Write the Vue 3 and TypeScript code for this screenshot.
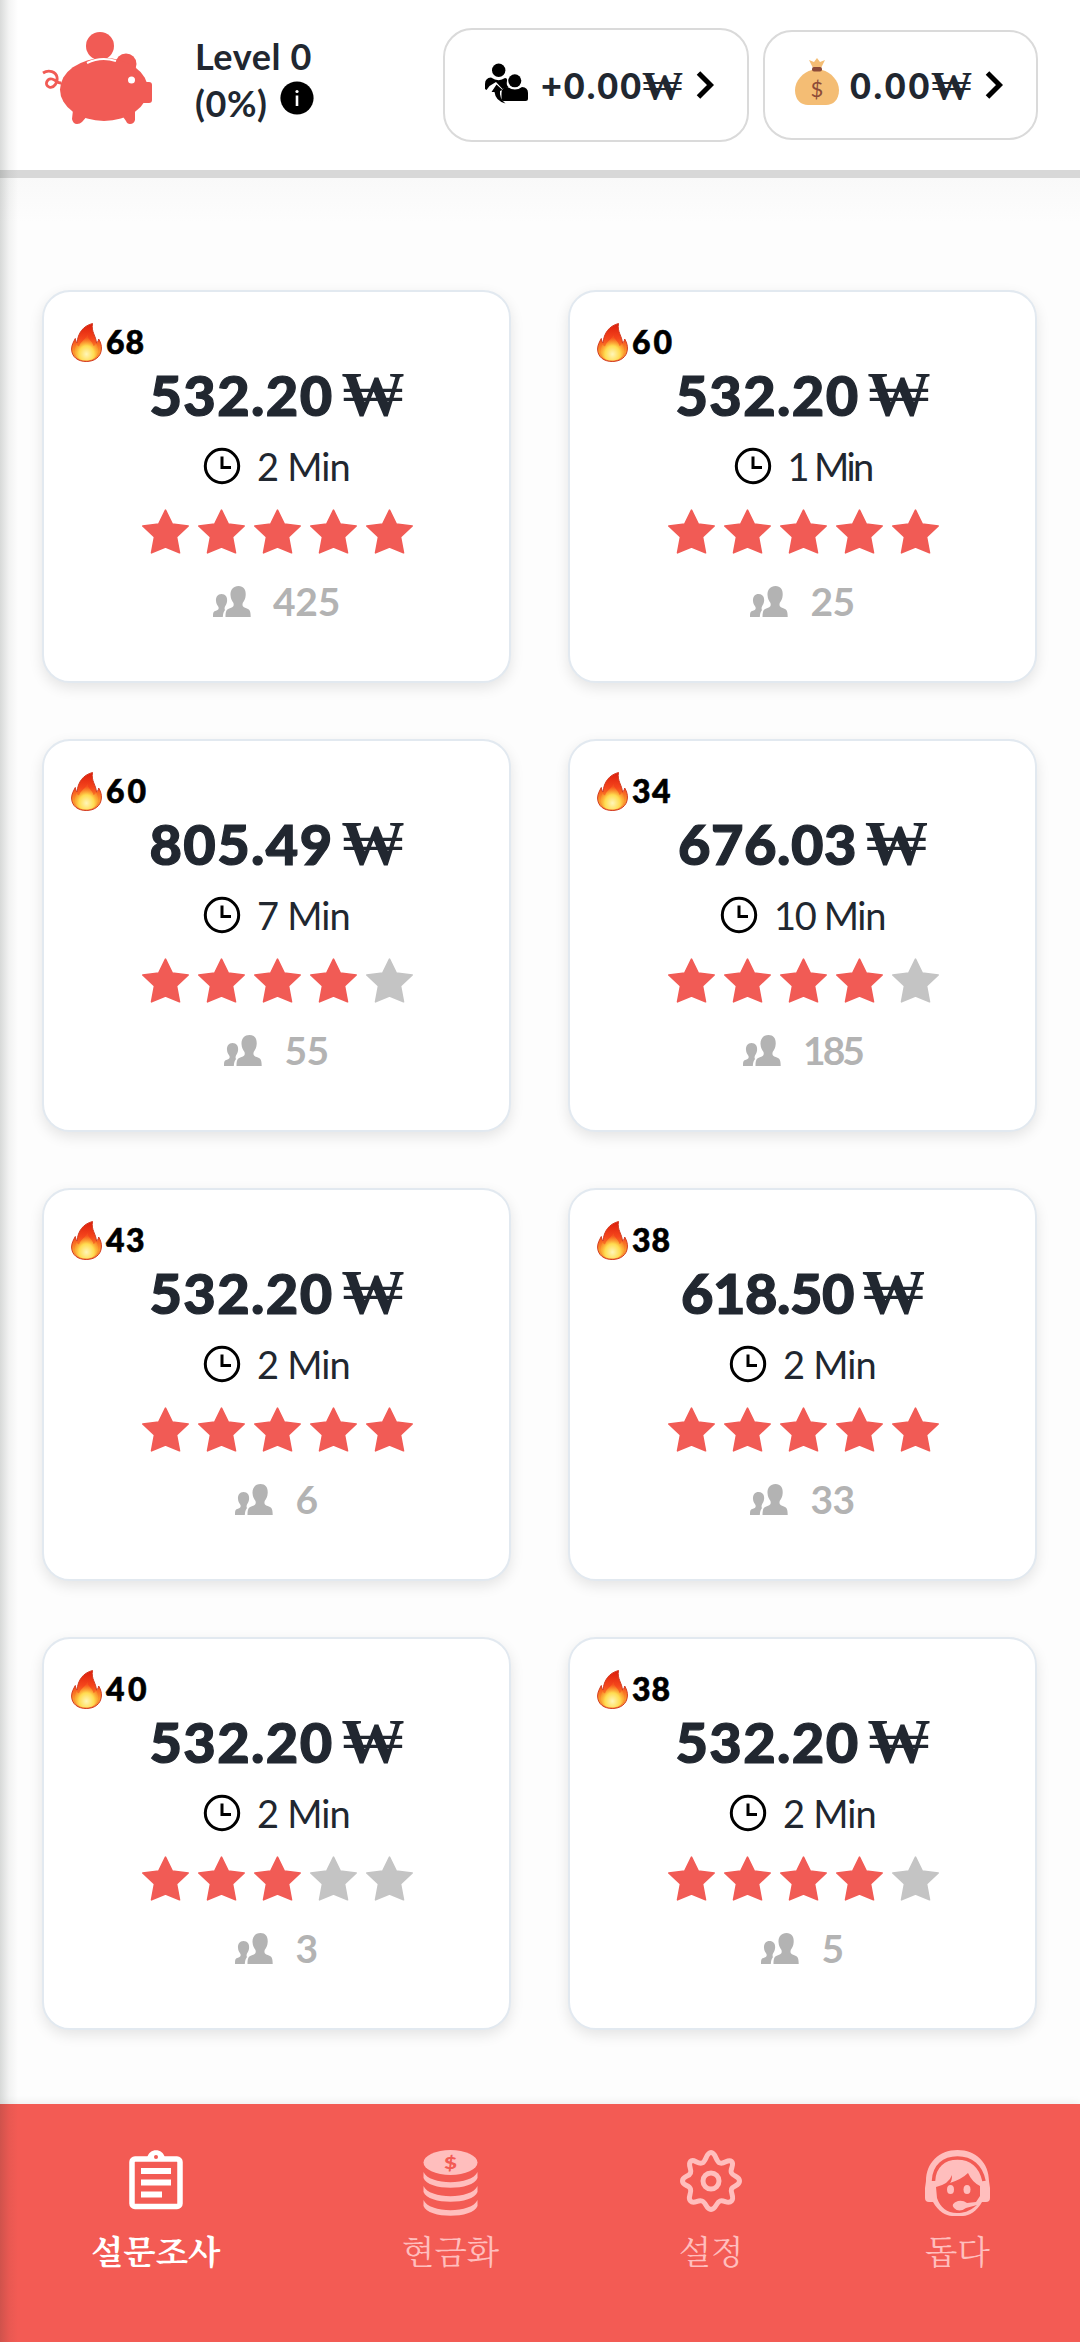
<script setup lang="ts">
interface Survey {
  score: string
  scoreWidth: number
  price: string
  priceWidth: number
  minutes: string
  minutesWidth: number
  stars: number
  people: string
  peopleWidth: number
}

const surveys: Survey[] = [
  { score: '68', scoreWidth: 39, price: '532.20', priceWidth: 184, minutes: '2 Min', minutesWidth: 93, stars: 5, people: '425', peopleWidth: 67 },
  { score: '60', scoreWidth: 43, price: '532.20', priceWidth: 184, minutes: '1 Min', minutesWidth: 84, stars: 5, people: '25', peopleWidth: 44 },
  { score: '60', scoreWidth: 43, price: '805.49', priceWidth: 184, minutes: '7 Min', minutesWidth: 93, stars: 4, people: '55', peopleWidth: 44 },
  { score: '34', scoreWidth: 40, price: '676.03', priceWidth: 179, minutes: '10 Min', minutesWidth: 111, stars: 4, people: '185', peopleWidth: 59 },
  { score: '43', scoreWidth: 40, price: '532.20', priceWidth: 184, minutes: '2 Min', minutesWidth: 93, stars: 5, people: '6', peopleWidth: 22 },
  { score: '38', scoreWidth: 39, price: '618.50', priceWidth: 173, minutes: '2 Min', minutesWidth: 93, stars: 5, people: '33', peopleWidth: 44 },
  { score: '40', scoreWidth: 44, price: '532.20', priceWidth: 184, minutes: '2 Min', minutesWidth: 93, stars: 3, people: '3', peopleWidth: 22 },
  { score: '38', scoreWidth: 39, price: '532.20', priceWidth: 184, minutes: '2 Min', minutesWidth: 93, stars: 4, people: '5', peopleWidth: 22 },
]

const ctx = document.createElement('canvas').getContext('2d')

// Letter spacing that makes a string fill the given width in the given font.
function fit(text: string, font: string, width: number) {
  if (!ctx) return {}
  ctx.font = font
  const spacing = (width - ctx.measureText(text).width) / text.length
  return { letterSpacing: `${spacing.toFixed(2)}px` }
}
</script>

<template>
  <div class="screen">
    <header class="topbar">
      <svg class="pig" viewBox="0 0 110 92" width="110" height="92">
        <g fill="#f15b55">
          <circle cx="58" cy="14" r="14" />
          <circle cx="84" cy="32" r="10.500" />
          <ellipse cx="62" cy="57.500" rx="44" ry="31.500" />
          <path d="M98 50h9q3 0 3 3v15q0 3-3 3h-9z" />
          <path d="M31 78h16v4l-7 8q-2 2-5 2-4 0-5-5zM79 82l14-5v11q-1 4-5 4-3 0-4-3z" />
        </g>
        <path d="M45 31q14-7 29-2" fill="none" stroke="#fff" stroke-width="2" />
        <circle cx="89.500" cy="48" r="3.500" fill="#fff" />
        <path d="M1 41c6-4 13-1 14 4s-3 12-8 10-2-9 3-8c4 1 5 4 9 4" fill="none" stroke="#f15b55" stroke-width="2.800" />
      </svg>
      <div class="level">
        <div class="line">Level 0</div>
        <div class="line">
          <span>(0%)</span>
          <svg class="info" viewBox="0 0 34 34" width="34" height="34">
            <circle cx="17" cy="17" r="16.600" fill="#000" />
            <circle cx="17" cy="10.500" r="1.600" fill="#fff" />
            <path d="M17 14.500V25" stroke="#fff" stroke-width="2.600" />
          </svg>
        </div>
      </div>
      <div class="pill refer">
        <svg class="friends" viewBox="0 0 44 41" width="44" height="41">
          <circle cx="13.700" cy="7.300" r="6.700" />
          <path d="M0 26v-5q0-6 6-6.500 7.500 5 14 .5 2.500 0 2 3-1 4 1.500 6l-6 2-6.500-7-6.500 4-3 4z" />
          <circle cx="29.800" cy="17.800" r="6.500" />
          <path d="M16.500 36V30q0-5.500 6-6 7.500 5 14.500 0 6 .5 6 6v5.500q0 2.500-2.500 2.500H18.500q-2 0-2-2z" />
          <path d="M6.500 29l5-7.500 6 5.500-2.500 1q-1 7 5.500 12.500-10-2.500-11-11.500z" />
        </svg>
        <span class="money">
          <span class="amount" :style="fit('+0.00', '900 36px Lato', 102)">+0.00</span><span class="won">₩</span>
        </span>
        <svg class="chev" viewBox="0 0 18 28" width="18" height="28"><path d="M2.500 2L14.500 14 2.500 26" /></svg>
      </div>
      <div class="pill cash">
        <svg class="bag" viewBox="0 0 44 48" width="44" height="48">
          <path d="M14 2l5 2 3-4 3 4 5-2-4 8h-8z" fill="#f4bd74" />
          <path d="M17 12h10c9 2 17 11 17 20 0 10-6 15-13 15H13C6 47 0 42 0 32c0-9 8-18 17-20z" fill="#f4bd74" />
          <rect x="17" y="9" width="10" height="4.500" rx="2" fill="#8d4b38" />
          <text x="22" y="39" text-anchor="middle" font-family="Lato" font-size="22" fill="#8d4b38">$</text>
        </svg>
        <span class="money">
          <span class="amount" :style="fit('0.00', '900 36px Lato', 82)">0.00</span><span class="won">₩</span>
        </span>
        <svg class="chev" viewBox="0 0 18 28" width="18" height="28"><path d="M2.500 2L14.500 14 2.500 26" /></svg>
      </div>
    </header>

    <main class="grid">
      <article v-for="(s, i) in surveys" :key="i" class="card">
        <div class="badge">
          <svg viewBox="0 0 31 39" width="31" height="39">
            <defs>
              <linearGradient :id="`outer${i}`" x1="0" y1="0" x2="0" y2="1">
                <stop offset="0" stop-color="#dc1c0c" />
                <stop offset=".4" stop-color="#f5461c" />
                <stop offset=".75" stop-color="#fb9a2c" />
                <stop offset="1" stop-color="#f3843a" />
              </linearGradient>
              <radialGradient :id="`inner${i}`" cx=".5" cy=".75" r=".65">
                <stop offset="0" stop-color="#fff6b8" />
                <stop offset=".5" stop-color="#ffdc50" />
                <stop offset="1" stop-color="#fb8c20" stop-opacity=".2" />
              </radialGradient>
            </defs>
            <path d="M21.500 .5C20 9 25 13 25.500 20c1.500-1 2-2.500 2.200-4C30 20 30.600 23 30.400 26c-.4 8-7 12.500-15.200 12.500S.6 34 .6 26C.6 22 2.500 19 4.300 15.500c.3 2 .7 3.500 1.700 4.500C7 10 12 3 21.500 .5z" :fill="`url(#outer${i})`" stroke="#d23a20" stroke-width="1" />
            <path d="M16.500 12c0 4 5 6 6 11 1.500-.5 2-1.500 2.500-3 5 9 1 17.500-9.800 17.500S1.500 30 5.500 21c.7 1.500 1.500 2 2.500 2.500C9 19 15 16 16.500 12z" :fill="`url(#inner${i})`" />
          </svg>
          <span class="score" :style="fit(s.score, '900 32px Lato', s.scoreWidth)">{{ s.score }}</span>
        </div>
        <div class="row price">
          <span :style="fit(s.price, '900 56px Lato', s.priceWidth)">{{ s.price }}</span>
          <span class="won">₩</span>
        </div>
        <div class="row time">
          <svg viewBox="0 0 38 38" width="38" height="38" fill="none" stroke="#000">
            <circle cx="19" cy="19" r="16.700" stroke-width="3" />
            <path d="M19 9.500V20.500H28" stroke-width="3" />
          </svg>
          <span :style="fit(s.minutes, '400 38px Lato', s.minutesWidth)">{{ s.minutes }}</span>
        </div>
        <div class="stars">
          <svg v-for="n in 5" :key="n" viewBox="0 0 47 45" width="47" height="45" :class="{ on: n <= s.stars }">
            <path d="M23.500 1.200l6.800 13.800 15.900 2L34.500 27.800 37.500 43.800 23.500 38 9.500 43.800 12.500 27.800 .8 17l15.900-2z" />
          </svg>
        </div>
        <div class="row people">
          <svg viewBox="0 0 38 31" width="38" height="31" fill="#b3b3b3">
            <path d="M25.500 0c5 0 7.500 3.500 7.200 9-.2 4-1.700 6-3 8-.8 3 .3 4 3 5 3.500 1.300 5 2 5 9H12.500c0-7 1.500-7.700 5-9 2.700-1 3.800-2 3-5-1.300-2-2.800-4-3-8C17.300 3.500 20.500 0 25.500 0z" />
            <path d="M8.500 8c4 0 6 3 5.600 7-.3 3-1.500 4-2.300 6-.6 2 .2 3 .2 3-1.500 1.800-2 4-2.200 7H0c0-5 .6-5.500 3-6.300 2.500-.7 3-1.700 2.500-3.700C4.500 19 3.200 18 3 15c-.3-4 1.700-7 5.500-7z" />
          </svg>
          <span :style="fit(s.people, '700 39px Lato', s.peopleWidth)">{{ s.people }}</span>
        </div>
      </article>
    </main>

    <nav class="nav">
      <a class="tab active">
        <svg viewBox="0 0 54 60" width="54" height="60">
          <rect x="3" y="9" width="48" height="47.500" rx="3" fill="none" stroke="#fff" stroke-width="5.500" />
          <path d="M18 8C20-2.500 34-2.500 36 8z" fill="#fff" />
          <circle cx="27" cy="7" r="2" fill="#f35b54" />
          <path d="M12 21h30M12 32.500h30M12 44.500h21" stroke="#fff" stroke-width="6" />
        </svg>
        <span>설문조사</span>
      </a>
      <a class="tab">
        <svg viewBox="0 0 55 66" width="55" height="66">
          <ellipse cx="27.500" cy="12.500" rx="27" ry="12.500" fill="#ffbebd" />
          <text x="27.500" y="18.500" text-anchor="middle" font-family="Lato" font-weight="900" font-size="17" fill="#f35b54" textLength="13" lengthAdjust="spacingAndGlyphs">$</text>
          <path v-for="y in [22, 36, 50]" :key="y" :transform="`translate(0 ${y})`" d="M.5 0C6 13.500 49 13.500 54.500 0V6C50 19 5 19 .5 6z" fill="#ffbebd" />
        </svg>
        <span>현금화</span>
      </a>
      <a class="tab gear">
        <svg viewBox="0 0 62 62" width="62" height="62" fill="none" stroke="#ffbebd" stroke-width="5">
          <circle cx="31" cy="31" r="8" />
          <path stroke-linejoin="round" d="M31 2.500c5 0 4.500 9 9 10.500s8-4.500 11.500-1.500-2 7.500 0 11.500 8 3 8 8-6.500 4.500-8 8 3.500 8.500 0 12-7.500-1.500-11.500 0-4 8.500-9 8.500-4.500-7-9-8.500-8 3.500-11.500 0 1.500-7.500 0-12-8-3-8-8 6.500-4 8-8-3-8 0-11.500 7 3 11.500 1.500 4-10.500 9-10.500z" />
        </svg>
        <span>설정</span>
      </a>
      <a class="tab">
        <svg viewBox="0 0 65 66" width="65" height="66">
          <path d="M1 31C1 13 14 0 32.500 0S64 13 64 31l1 7v10q0 4-4 4h-4C52 61 44 66 38 66H27C21 66 13 61 8 52H4q-4 0-4-4V38z" fill="#ffbebd" />
          <path d="M8.500 31C9 16 19 8 32.500 8S56 16 59 31" fill="none" stroke="#f35b54" stroke-width="3.500" />
          <path d="M11 37q13-3 16-12 0 6-2 8 12-4 18-10 4 9 12 13v10l-4 6-9 1q-4-3-9-2-8 3-4 7 5 5 12 0l11-3c-8 7-14 8-20 8-10 0-17-6-20-15z" fill="#f35b54" />
          <ellipse cx="25.500" cy="39.500" rx="3.500" ry="4.500" fill="#ffbebd" />
          <ellipse cx="42" cy="39.500" rx="3.500" ry="4.500" fill="#ffbebd" />
        </svg>
        <span>돕다</span>
      </a>
    </nav>
    <div class="edge"></div>
  </div>
</template>

<style>
body { margin: 0; background: #fdfdfd; }
</style>

<style scoped>
.screen {
  position: relative;
  display: flex;
  flex-direction: column;
  width: 1080px;
  height: 2342px;
  overflow: hidden;
  background: #fdfdfd;
  color: #212730;
  font-family: Lato, "Noto Sans CJK KR", sans-serif;
}
.screen * { box-sizing: border-box; }
svg { display: block; flex: none; }
span { white-space: nowrap; }
.topbar {
  display: flex;
  align-items: center;
  height: 178px;
  padding: 0 42px;
  background: #fff;
  border-bottom: 8px solid #d8d8d8;
}
.pig { margin-top: -14px; }
.level { width: 248px; margin-left: 43px; font-weight: 700; font-size: 36px; margin-top: -10px; }
.line { display: flex; height: 47px; line-height: 47px; letter-spacing: .6px; }
.info { margin: 1px 0 0 12px; }
.pill {
  display: flex;
  align-items: center;
  border: 2px solid #dadada;
  border-radius: 29px;
}
.refer { width: 306px; height: 114px; padding-left: 40px; }
.cash { width: 275px; height: 110px; margin-left: 14px; padding-left: 30px; }
.friends { margin-top: -4px; }
.bag { margin-top: -7px; }
.money { display: flex; align-items: baseline; height: 44px; margin-left: 12px; line-height: 44px; font-size: 36px; font-weight: 900; }
.cash .money { margin-left: 11px; }
.won { font-family: "Liberation Serif", serif; font-weight: 700; }
.money .won { width: 39px; font-size: 41px; text-indent: -1px; }
.chev { margin-left: 14px; fill: none; stroke: #000; stroke-width: 5px; }
.grid {
  display: grid;
  grid-template-columns: 469px 469px;
  grid-auto-rows: 393px;
  gap: 56px 57px;
  flex: 1;
  padding: 112px 42px 0;
  background: linear-gradient(#f9f9f9, #fdfdfd 45px);
}
.card {
  display: flex;
  flex-direction: column;
  padding: 31px 26px 0 27px;
  background: #fff;
  border: 2px solid #e2e9f0;
  border-radius: 28px;
  box-shadow: 0 5px 14px rgba(0, 0, 0, .1);
}
.badge { display: flex; gap: 4px; height: 39px; color: #000; }
.score { font-size: 32px; font-weight: 900; line-height: 37px; -webkit-text-stroke: .6px; }
.row { display: flex; align-items: center; justify-content: center; }
.price { align-items: baseline; height: 60px; margin-top: 3px; gap: 8px; font-size: 56px; font-weight: 900; line-height: 60px; }
.price span:first-child { -webkit-text-stroke: 1.200px; }
.price .won { font-size: 63px; }
.time { height: 40px; margin: 21px 1px 0 0; gap: 16px; font-size: 38px; line-height: 40px; }
.stars { display: flex; justify-content: center; gap: 9px; height: 45px; margin: 23px 0 0; }
.stars path { fill: #c4c4c4; stroke: #c4c4c4; stroke-width: 1.600px; stroke-linejoin: round; }
.stars .on path { fill: #f15b55; stroke: #f15b55; }
.people { height: 40px; margin: 27px 1px 0 0; gap: 22px; color: #b3b3b3; font-size: 39px; font-weight: 700; line-height: 40px; }
.nav {
  display: flex;
  justify-content: space-between;
  height: 238px;
  padding: 46px 90px 0 91px;
  background: #f35b54;
  box-shadow: 0 -2px 8px rgba(0, 0, 0, .06);
}
.tab {
  display: flex;
  flex-direction: column;
  align-items: center;
  color: #ffbebd;
  font-family: "Noto Serif CJK KR", "Noto Sans CJK KR", sans-serif;
  font-size: 33.500px;
  font-weight: 400;
}
.tab.gear { margin-left: -2px; }
.tab svg { margin-bottom: auto; }
.tab span { margin-bottom: 72px; line-height: 40px; }
.tab.active { color: #fff; font-weight: 700; }
.edge {
  position: absolute;
  inset: 0 auto 0 0;
  width: 18px;
  background: linear-gradient(90deg, rgba(30, 40, 35, .17), rgba(30, 40, 35, .05) 50%, transparent);
  pointer-events: none;
}
</style>
